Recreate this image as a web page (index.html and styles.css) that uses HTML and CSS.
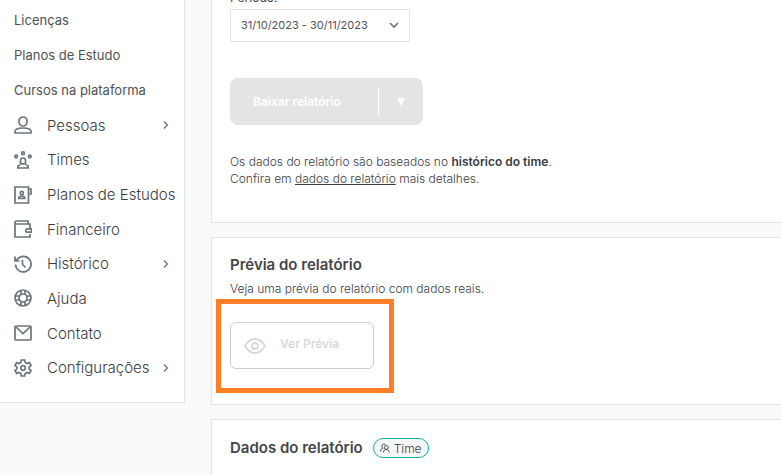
FILE: index.html
```html
<!DOCTYPE html>
<html lang="pt-BR">
<head>
<meta charset="utf-8">
<title>Relatórios</title>
<link rel="stylesheet" href="styles.css">
</head>
<body>
<div class="layout">
  <nav class="sidebar" aria-label="Menu principal">
    <ul class="submenu">
      <li><a href="#">Licenças</a></li>
      <li><a href="#">Planos de Estudo</a></li>
      <li><a href="#">Cursos na plataforma</a></li>
    </ul>
    <ul class="menu">
      <li><a href="#">
        <svg class="icon" viewBox="0 0 18 18"><rect x="5" y="1" width="8" height="9" rx="4"/><path d="M1 17v-1.500c0-2.500 3-3.500 8-3.500s8 1 8 3.500V17z"/></svg>
        <span>Pessoas</span>
        <svg class="chevron" viewBox="0 0 8 8"><path d="M2 .5l3.500 3.500L2 7.500"/></svg>
      </a></li>
      <li><a href="#">
        <svg class="icon" viewBox="0 0 18 18"><circle cx="9" cy="2.300" r="1.400"/><circle cx="2.200" cy="5.500" r="1.300"/><circle cx="15.800" cy="5.500" r="1.300"/><path d="M6.500 13V9.500a2.500 2.500 0 0 1 5 0V13M6.500 12.800h5M3.800 17v-1c0-1.500 1-2 2.500-2M14.200 17v-1c0-1.500-1-2-2.500-2M3 17h12"/></svg>
        <span>Times</span>
      </a></li>
      <li><a href="#">
        <svg class="icon" viewBox="0 0 18 18"><path d="M1 1h13.500v16H1zM14.500 3h2.500v5h-1.500"/><rect x="6.300" y="5.300" width="3" height="3.500" rx="1.500"/><path d="M4.800 12.300c0-1.600.8-2.300 3-2.300s3 .7 3 2.300z"/></svg>
        <span>Planos de Estudos</span>
      </a></li>
      <li><a href="#">
        <svg class="icon" viewBox="0 0 18 18"><path d="M14 4V1H2.500A1.500 1.500 0 0 0 1 2.500V17h15v-3M1 2.500C1 3.500 1.500 4 2.500 4H16v4M17.500 8.800h-4a1.700 1.700 0 0 0 0 3.400h4z"/></svg>
        <span>Financeiro</span>
      </a></li>
      <li><a href="#">
        <svg class="icon" viewBox="0 0 18 18"><path d="M1.500 9.500A7.800 7.800 0 1 0 3 4.500L1.500 6M1 1.500V6h4.500M8.500 5v4.500l3 3"/></svg>
        <span>Histórico</span>
        <svg class="chevron" viewBox="0 0 8 8"><path d="M2 .5l3.500 3.500L2 7.500"/></svg>
      </a></li>
      <li><a href="#">
        <svg class="icon" viewBox="0 0 18 18"><circle cx="9" cy="9" r="8"/><circle cx="9" cy="9" r="4"/><path d="M7 1.500v4M11 1.500v4M7 12.500v4M11 12.500v4M1.500 7h4M1.500 11h4M12.500 7h4M12.500 11h4"/></svg>
        <span>Ajuda</span>
      </a></li>
      <li><a href="#">
        <svg class="icon" viewBox="0 0 18 18"><rect x="1" y="2" width="16" height="14" rx="1"/><path d="M2 3l7 6.500L16 3"/></svg>
        <span>Contato</span>
      </a></li>
      <li><a href="#">
        <svg class="icon" viewBox="0 0 18 18"><path d="M7.300 1h3.400l.5 2.500 1.700 1 2.400-.9 1.700 2.900-1.900 1.600v1.800l1.900 1.600-1.700 2.900-2.400-.9-1.700 1-.5 2.500H7.300l-.5-2.500-1.700-1-2.400.9L1 11.500l1.900-1.600V8.100L1 6.500l1.700-2.900 2.400.9 1.700-1z"/><circle cx="9" cy="9" r="2.300"/></svg>
        <span>Configurações</span>
        <svg class="chevron" viewBox="0 0 8 8"><path d="M2 .5l3.500 3.500L2 7.500"/></svg>
      </a></li>
    </ul>
  </nav>

  <main class="content">
    <section class="card filters">
      <label class="label" for="periodo">Período:</label>
      <div class="select">
        <select id="periodo"><option>31/10/2023 - 30/11/2023</option></select>
        <svg class="arrow" viewBox="0 0 10 10"><path d="M1 3l4 4 4-4"/></svg>
      </div>
      <div class="download">
        <button class="download-main" disabled>Baixar relatório</button>
        <button class="download-more" disabled aria-label="Mais formatos"><svg viewBox="0 0 8 8"><path d="M0 0h8L4 8z"/></svg></button>
      </div>
      <p>Os dados do relatório são baseados no <strong>histórico do time</strong>.<br>Confira em <a href="#dados">dados do relatório</a> mais detalhes.</p>
    </section>

    <section class="card preview">
      <h2>Prévia do relatório</h2>
      <p>Veja uma prévia do relatório com dados reais.</p>
      <div class="highlight">
        <button class="preview-button" disabled>
          <svg viewBox="0 0 22 16"><path d="M1 8c2.500-4.300 6-7 10-7s7.500 2.700 10 7c-2.500 4.300-6 7-10 7S3.500 12.300 1 8z"/><circle cx="11" cy="8" r="3"/></svg>
          <span>Ver Prévia</span>
        </button>
      </div>
    </section>

    <section class="card data" id="dados">
      <h2>Dados do relatório</h2>
      <span class="badge">
        <svg viewBox="0 0 10 10"><path d="M.6 8.500c0-2 .8-3 2.200-3.200C1.500 4 1.500 1 3.800 1c1 0 1.600.5 1.800 1.200"/><circle cx="6.300" cy="4.500" r="1.900"/><path d="M3.500 9.500c0-2 .9-3 2.800-3s2.900 1 2.900 3"/></svg>
        Time
      </span>
    </section>
  </main>
</div>
</body>
</html>
```
FILE: styles.css
```css
* {
  box-sizing: border-box;
}

body {
  margin: 0;
  overflow: hidden;
  background: #f9fafc;
  color: #3c3d3f;
  font: 300 12px/17px Inter, "Liberation Sans", sans-serif;
}

h2, p, ul {
  margin: 0;
  padding: 0;
}

ul {
  list-style: none;
}

a {
  color: inherit;
}

button, select {
  font: inherit;
}

svg {
  flex: none;
  fill: none;
  stroke: currentColor;
}

.layout {
  display: flex;
  align-items: flex-start;
  gap: 26px;
}

.sidebar {
  flex: 0 0 185px;
  min-width: 0;
  padding: 3px 14px 17px;
  background: #fff;
  border: solid #dfe5ea;
  border-width: 0 1px 1px 0;
}

.submenu, .menu {
  display: flex;
  flex-direction: column;
}

.submenu {
  min-height: 105px;
  font-size: 13px;
  font-weight: 400;
  color: #505154;
}

.menu {
  min-height: 277px;
  font-size: 15px;
}

.sidebar li {
  display: flex;
  flex: 1;
}

.sidebar a {
  display: flex;
  flex: 1;
  align-items: center;
  min-width: 0;
  text-decoration: none;
  white-space: nowrap;
}

.icon {
  width: 18px;
  height: 18px;
  margin-right: 15px;
  color: #6c757a;
  stroke-width: 1.7;
}

.chevron {
  width: 8px;
  height: 8px;
  margin-left: auto;
  color: #6c757a;
  stroke-width: 1.4;
}

.menu span {
  flex: 1;
  min-width: 0;
}

.content {
  flex: 1;
  min-width: 0;
  display: grid;
  gap: 14px;
  margin-top: -30px;
}

.card {
  padding: 18px;
  background: #fff;
  border: solid #dfe5ea;
  border-width: 1px 0 1px 1px;
}

.filters {
  padding-bottom: 35px;
}

.label {
  display: block;
  margin-bottom: 3px;
  font-weight: 400;
}

.select {
  position: relative;
  width: 180px;
}

.select select {
  appearance: none;
  width: 100%;
  height: 33px;
  padding: 0 10px;
  background: #fff;
  border: 1px solid #dfe5ea;
  border-radius: 0;
  color: #505154;
  font-size: 11px;
  font-weight: 400;
}

.arrow {
  position: absolute;
  top: 11px;
  right: 11px;
  width: 10px;
  height: 10px;
  color: #6c757a;
  stroke-width: 1.6;
  pointer-events: none;
}

.download {
  display: flex;
  align-items: center;
  width: 193px;
  height: 47px;
  margin: 36px 0 28px;
  background: #e4e4e4;
  border-radius: 8px;
}

.download button {
  padding: 0;
  background: none;
  border: 0;
  color: #fff;
}

.download .download-main {
  flex: 1;
  padding-left: 23px;
  font-weight: 600;
  text-align: left;
}

.download .download-more {
  width: 45px;
  height: 28px;
  border-left: 1px solid #fff;
}

.download-more svg {
  width: 8px;
  height: 8px;
  fill: #fff;
  stroke: none;
}

strong {
  font-weight: 600;
}

h2 {
  color: #444548;
  font-size: 15px;
  line-height: 18px;
  font-weight: 600;
}

.preview {
  padding-bottom: 35px;
}

.preview p {
  margin: 6px 0 25px;
}

.highlight {
  position: relative;
  width: 144px;
}

.highlight::after {
  content: "";
  position: absolute;
  inset: -23px -20px -24px -14px;
  border: 5px solid #ff7f27;
  pointer-events: none;
}

.preview-button {
  display: flex;
  align-items: center;
  gap: 14px;
  width: 100%;
  height: 47px;
  padding: 0 13px;
  background: #fff;
  border: 1px solid #c9ccd2;
  border-radius: 6px;
  color: #d5d9df;
  font-weight: 600;
}

.preview-button svg {
  width: 22px;
  height: 16px;
  stroke-width: 1.8;
}

.preview-button span {
  padding-bottom: 4px;
}

.data {
  display: flex;
  align-items: flex-start;
  gap: 10px;
}

.data h2 {
  line-height: 20px;
}

.badge {
  display: flex;
  align-items: center;
  gap: 4px;
  height: 20px;
  padding: 0 6px;
  background: #f5f6f7;
  border: 1px solid #12b896;
  border-radius: 10px;
}

.badge svg {
  width: 10px;
  height: 10px;
  stroke-width: 0.9;
}
```
